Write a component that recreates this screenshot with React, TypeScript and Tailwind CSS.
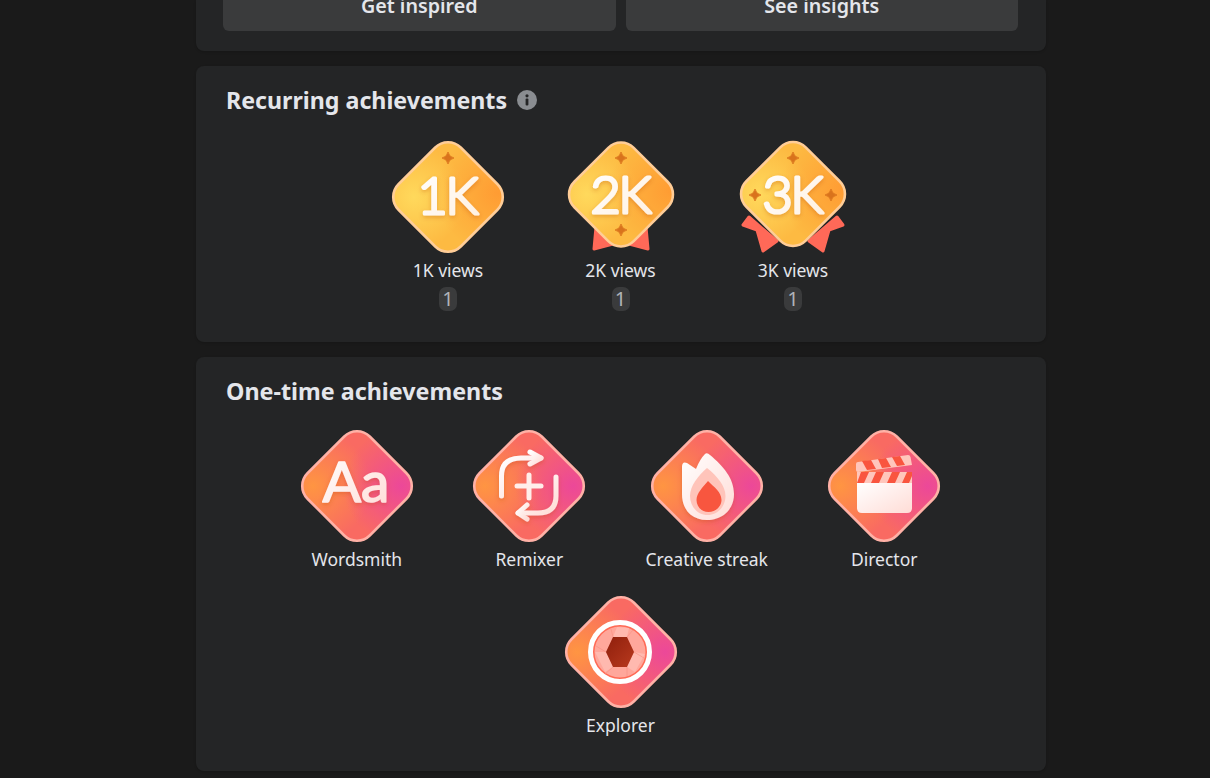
import React from "react";

const Star = ({ x, y, r = 6 }: { x: number; y: number; r?: number }) => (
  <path
    d={`M${x} ${y - r} Q${x + 1} ${y - 1} ${x + r} ${y} Q${x + 1} ${y + 1} ${x} ${y + r} Q${x - 1} ${y + 1} ${x - r} ${y} Q${x - 1} ${y - 1} ${x} ${y - r}Z`}
    fill="#d9731c"
    stroke="#d9731c"
    strokeWidth="0.8"
    strokeLinejoin="round"
  />
);

const Defs = () => (
  <svg width="0" height="0" className="absolute">
    <defs>
      <radialGradient id="goldL" gradientUnits="userSpaceOnUse" cx="26" cy="60" r="52">
        <stop offset="0" stopColor="#ffd95c" stopOpacity="1" />
        <stop offset="1" stopColor="#ffd95c" stopOpacity="0" />
      </radialGradient>
      <radialGradient id="goldR" gradientUnits="userSpaceOnUse" cx="110" cy="56" r="62">
        <stop offset="0" stopColor="#ff9c33" stopOpacity="1" />
        <stop offset="1" stopColor="#ff9c33" stopOpacity="0" />
      </radialGradient>
      <radialGradient id="pinkL" gradientUnits="userSpaceOnUse" cx="16" cy="60" r="58">
        <stop offset="0" stopColor="#ff9542" stopOpacity="1" />
        <stop offset="1" stopColor="#ff9542" stopOpacity="0" />
      </radialGradient>
      <radialGradient id="pinkR" gradientUnits="userSpaceOnUse" cx="104" cy="60" r="58">
        <stop offset="0" stopColor="#ec4899" stopOpacity="1" />
        <stop offset="1" stopColor="#ec4899" stopOpacity="0" />
      </radialGradient>
      <linearGradient id="whiteG" x1="0" y1="0" x2="1" y2="1">
        <stop offset="0" stopColor="#ffffff" />
        <stop offset="1" stopColor="#ffdcd6" />
      </linearGradient>
      <linearGradient id="goldText" x1="0" y1="0" x2="1" y2="1">
        <stop offset="0" stopColor="#ffffff" />
        <stop offset="1" stopColor="#fff0e0" />
      </linearGradient>
      <linearGradient id="hexG" x1="0" y1="0" x2="1" y2="1">
        <stop offset="0" stopColor="#8f1f0c" />
        <stop offset="1" stopColor="#b8391e" />
      </linearGradient>
      <filter id="soft" x="-20%" y="-20%" width="140%" height="150%">
        <feDropShadow dx="0" dy="2" stdDeviation="2" floodColor="#b8420f" floodOpacity="0.3" />
      </filter>
    </defs>
  </svg>
);

const diamond = (s: number, r: number) => {
  const d = s / Math.SQRT2;
  const t = r / Math.SQRT2;
  const a = `A${r} ${r} 0 0 1`;
  return [
    `M${60 - t} ${60 - d + t}`,
    `${a} ${60 + t} ${60 - d + t}`,
    `L${60 + d - t} ${60 - t}`,
    `${a} ${60 + d - t} ${60 + t}`,
    `L${60 + t} ${60 + d - t}`,
    `${a} ${60 - t} ${60 + d - t}`,
    `L${60 - d + t} ${60 + t}`,
    `${a} ${60 - d + t} ${60 - t}`,
    "Z",
  ].join(" ");
};

const Base = ({ kind, s = 88 }: { kind: "gold" | "pink"; s?: number }) => {
  const p = diamond(s, 18);
  const gold = kind === "gold";
  return (
    <>
      <path d={p} fill={gold ? "#fdba42" : "#f96a62"} />
      <path d={p} fill={gold ? "url(#goldL)" : "url(#pinkL)"} />
      <path d={p} fill={gold ? "url(#goldR)" : "url(#pinkR)"} />
      <path d={p} fill="none" stroke={gold ? "#ffcd97" : "#ffb1a6"} strokeWidth="2.6" />
    </>
  );
};

const Big = ({ t, x = 59, y = 78 }: { t: string; x?: number; y?: number }) => (
  <text
    x={x}
    y={y}
    textAnchor="middle"
    fontSize="52"
    fontWeight="300"
    letterSpacing="-2"
    fill="url(#goldText)"
    stroke="url(#goldText)"
    strokeWidth="3.2"
    strokeLinejoin="round"
    filter="url(#soft)"
    className="font-['Lato',sans-serif]"
  >
    {t}
  </text>
);

const Svg = ({ children }: { children: React.ReactNode }) => (
  <svg width="120" height="120" viewBox="0 0 120 120" className="block shrink-0">
    {children}
  </svg>
);

const K1 = () => (
  <Svg>
    <Base kind="gold" />
    <Star x={60} y={21} />
    <Big t="1K" y={77} />
  </Svg>
);

const K2 = () => (
  <Svg>
    <g fill="#ff6958" stroke="#ff6958" strokeWidth="3" strokeLinejoin="round">
      <path d="M35 90 L33 112 L52 107 Z" />
      <path d="M85 90 L87 112 L68 107 Z" />
    </g>
    <g transform="translate(0 -2.5)">
      <Base kind="gold" s={84} />
      <Star x={60} y={23.5} />
      <Star x={60} y={95.5} />
      <Big t="2K" y={78.5} />
    </g>
  </Svg>
);

const K3 = () => (
  <Svg>
    <g fill="#ff6958" stroke="#ff6958" strokeWidth="3" strokeLinejoin="round">
      <path d="M16 80 L10 88 L24 93 L30 114 L44 104 Z" />
      <path d="M104 80 L110 88 L96 93 L90 114 L76 104 Z" />
    </g>
    <g transform="translate(0 -3)">
      <Base kind="gold" s={84} />
      <Star x={60} y={24} />
      <Star x={22} y={61} />
      <Star x={98} y={61} />
      <Big t="3K" y={79} />
    </g>
  </Svg>
);

const Wordsmith = () => (
  <Svg>
    <Base kind="pink" />
    <text
      x="59"
      y="76"
      textAnchor="middle"
      fontSize="57"
      fontWeight="400"
      fill="url(#whiteG)"
      stroke="url(#whiteG)"
      strokeWidth="1.6"
      strokeLinejoin="round"
      filter="url(#soft)"
      className="font-['Lato',sans-serif]"
    >
      Aa
    </text>
  </Svg>
);

const Remixer = () => (
  <Svg>
    <Base kind="pink" />
    <g fill="none" stroke="url(#whiteG)" strokeWidth="5" strokeLinecap="round" strokeLinejoin="round" filter="url(#soft)">
      <path d="M32.5 70 V50 Q32.5 32 52 32 H72" />
      <path d="M61 26 L72 32 L61 38" />
      <path d="M87 51 V70 Q87 87 69 87 H49" />
      <path d="M58 79 L49 87 L58 93" />
    </g>
    <g stroke="#ffeeea" strokeWidth="5" strokeLinecap="round" fill="none">
      <path d="M48 60 H72" />
      <path d="M60 49 V72" />
    </g>
  </Svg>
);

const Streak = () => (
  <Svg>
    <Base kind="pink" />
    <path
      d="M35 41 Q35 35 40 37 L49 43 Q53 33 58 28 Q60 26 63 29 C76 40 87 52 87 68 C87 84 75 94 60 94 C45 94 35 84 35 68 Z"
      fill="url(#whiteG)"
      filter="url(#soft)"
    />
    <path d="M60 42 C70 50 78.5 60 78.5 70 C78.5 81 70 89 60.5 89 C51 89 43 81 43 70 C43 60 51 50 60 42 Z" fill="#ffc4ba" />
    <path d="M61 55 C67 61 74.5 66 74.5 74 C74.5 81 68 86 61.5 86 C55 86 49.5 81 49.5 74 C49.5 67 56 61 61 55 Z" fill="#f8563f" />
  </Svg>
);

const Director = () => (
  <Svg>
    <Base kind="pink" />
    <path d="M34 36 L84 29 Q86 29 86.5 31 L88 39 L34 46 Q32 46 32 44 V38 Q32 36 34 36 Z" fill="#ffc6bc" />
    <g fill="#f9553f">
      <path d="M38 35 L47 34 L52 43 L43 44 Z" />
      <path d="M54 33 L62 32 L67 41 L58 42 Z" />
      <path d="M68 31 L76 30 L81 39 L73 40 Z" />
    </g>
    <path d="M33 46 H88 V57 H33 Z" fill="#ffc6bc" />
    <g fill="#f9553f">
      <path d="M37 46 H45 L40 57 H33 Z" />
      <path d="M52 46 H60 L55 57 H47 Z" />
      <path d="M68 46 H76 L71 57 H63 Z" />
      <path d="M83 46 H88 V50 L85 57 H78 Z" />
    </g>
    <path d="M33 57 H88 V82 Q88 87 83 87 H38 Q33 87 33 82 Z" fill="url(#whiteG)" />
  </Svg>
);

const Explorer = () => (
  <Svg>
    <Base kind="pink" />
    <circle cx="59" cy="60" r="29.5" fill="#ff6a55" stroke="#ffffff" strokeWidth="5" />
    <circle cx="59" cy="60" r="25.5" fill="#ffa79b" />
    <g fill="#ffb9af">
      <path d="M52 45 L66 45 L68 36 L56 35 Z" />
      <path d="M73 60 L66 75 L74 80 L84 62 Z" />
      <path d="M45 60 L52 75 L44 80 L34 60 Z" />
    </g>
    <g stroke="#f58d80" strokeWidth="0.8" fill="none" opacity="0.7">
      <path d="M66 45 L72 38" />
      <path d="M73 60 L83 66" />
      <path d="M66 75 L66 84" />
      <path d="M52 75 L44 82" />
      <path d="M45 60 L35 54" />
      <path d="M52 45 L50 37" />
    </g>
    <path d="M45 60 L52 45 L66 45 L73 60 L66 75 L52 75 Z" fill="url(#hexG)" />
  </Svg>
);

const Item = ({ icon, label, count }: { icon: React.ReactNode; label: string; count?: number }) => (
  <div className="flex min-w-[112.5px] flex-col items-center">
    <div className="flex h-[120px] w-[112.5px] justify-center">{icon}</div>
    <div className="mt-[2px] h-[22px] text-[17.5px] leading-[22px] whitespace-nowrap text-[#e4e6eb]">{label}</div>
    {count !== undefined && (
      <div className="mt-[6px] flex h-[24px] w-[18px] items-center justify-center rounded-[7px] bg-[#3a3b3c] text-[20px] text-[#b0b3b8]">
        {count}
      </div>
    )}
  </div>
);

export default function App() {
  return (
    <div className="h-[778px] w-full overflow-hidden bg-[#1a1a1a] font-['Noto_Sans',sans-serif]">
      <Defs />
      <div className="ml-[196px] flex w-[850px] flex-col gap-[15px]">
        <div className="flex h-[51px] items-end gap-[10px] overflow-hidden rounded-b-lg bg-[#242526] pr-[28px] pb-[20px] pl-[27px] shadow-sm">
          {["Get inspired", "See insights"].map((t) => (
            <div
              key={t}
              className="flex h-[50px] flex-1 shrink-0 items-center justify-center rounded-md bg-[#3a3b3c] text-[19.7px] font-semibold text-[#e4e6eb]"
            >
              {t}
            </div>
          ))}
        </div>

        <section className="flex h-[276px] flex-col rounded-lg bg-[#242526] pr-[31px] pl-[30px] pt-[19px] shadow-sm">
          <div className="flex h-[30px] items-center gap-[10px]">
            <h2 className="text-[23.2px] leading-[30px] font-bold text-[#e4e6eb]">Recurring achievements</h2>
            <svg width="20" height="20" viewBox="0 0 20 20">
              <circle cx="10" cy="10" r="10" fill="#8a8d91" />
              <circle cx="10" cy="5.8" r="1.6" fill="#242526" />
              <rect x="8.6" y="8.6" width="2.8" height="7" rx="1" fill="#242526" />
            </svg>
          </div>
          <div className="mt-[22px] flex justify-center gap-[60px]">
            <Item icon={<K1 />} label="1K views" count={1} />
            <Item icon={<K2 />} label="2K views" count={1} />
            <Item icon={<K3 />} label="3K views" count={1} />
          </div>
        </section>

        <section className="flex h-[414px] flex-col rounded-lg bg-[#242526] pr-[31px] pl-[30px] pt-[19px] shadow-sm">
          <h2 className="h-[30px] text-[23.3px] leading-[30px] font-bold text-[#e4e6eb]">One-time achievements</h2>
          <div className="mt-[20px] flex flex-wrap justify-center gap-x-[60px] gap-y-[22px] px-[60px]">
            <Item icon={<Wordsmith />} label="Wordsmith" />
            <Item icon={<Remixer />} label="Remixer" />
            <Item icon={<Streak />} label="Creative streak" />
            <Item icon={<Director />} label="Director" />
            <Item icon={<Explorer />} label="Explorer" />
          </div>
        </section>
      </div>
    </div>
  );
}
